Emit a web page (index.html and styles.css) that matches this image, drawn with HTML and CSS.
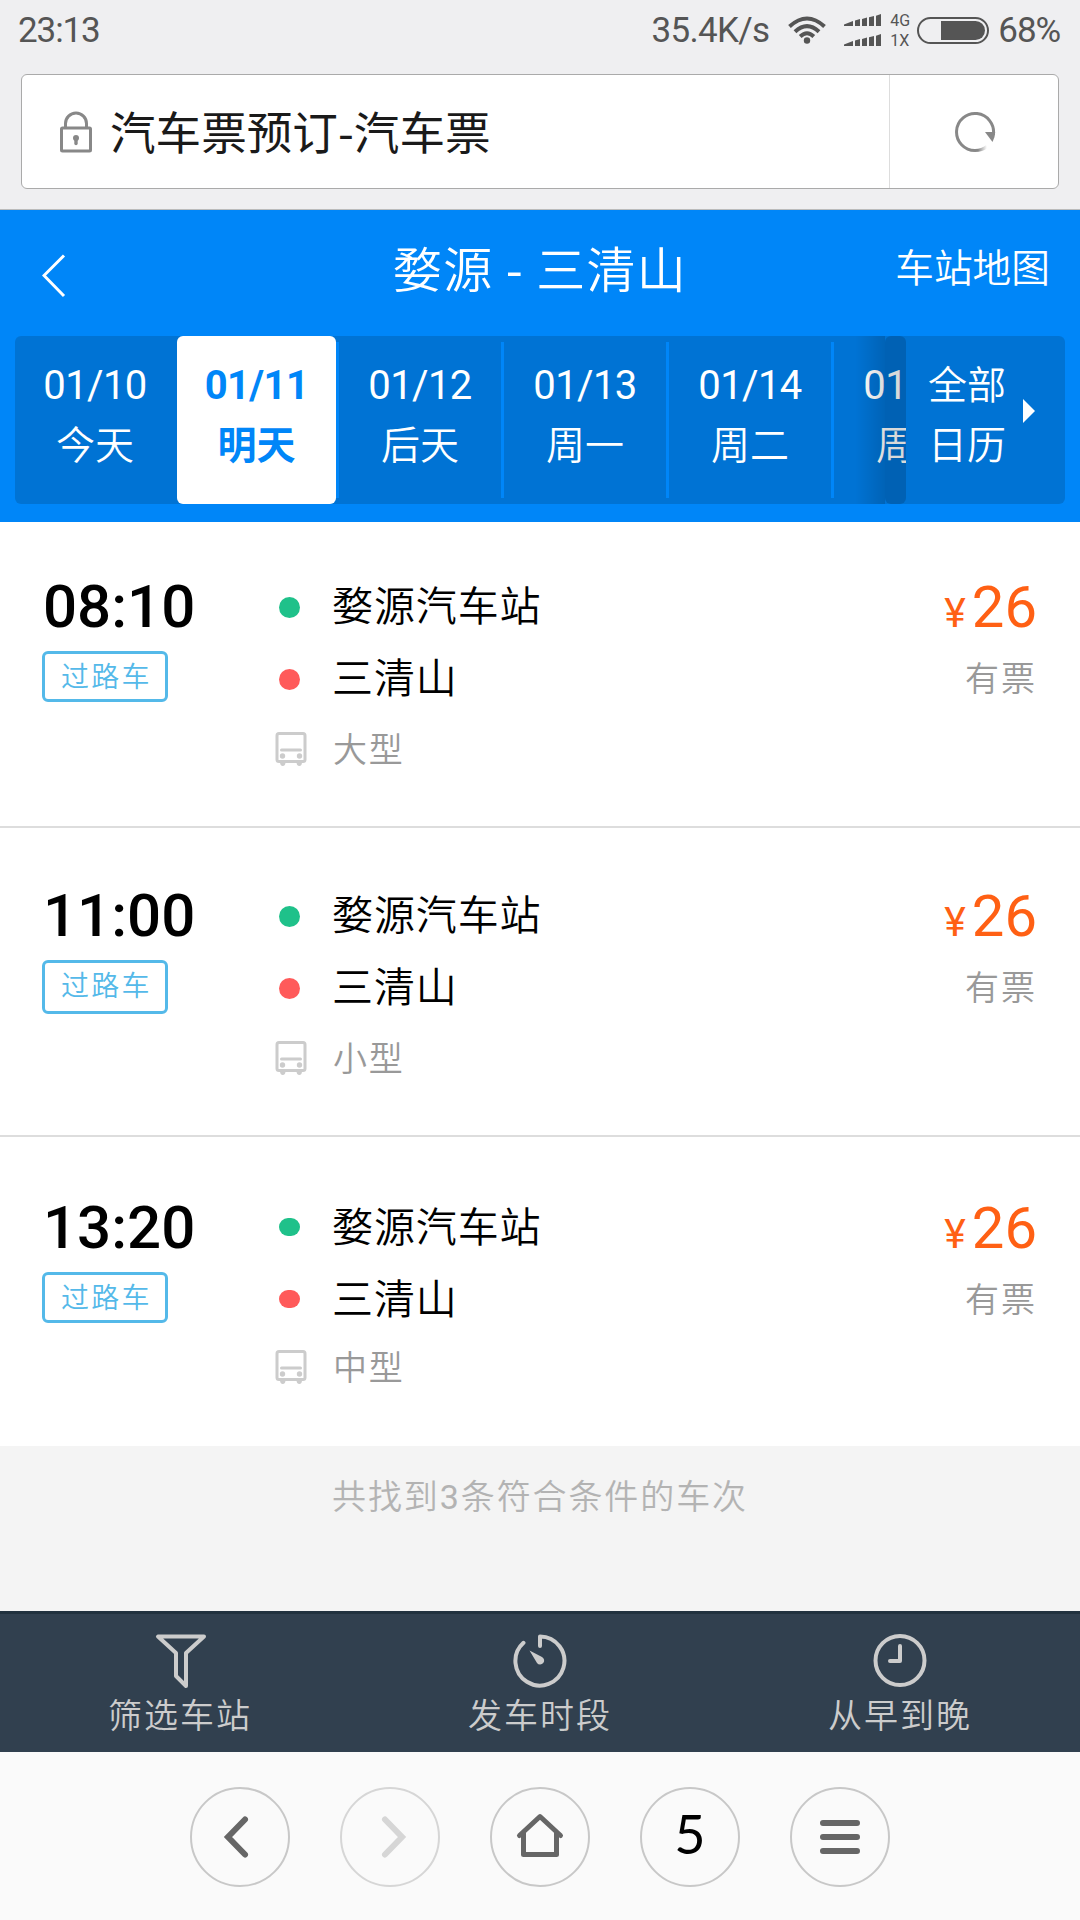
FILE: index.html
```html
<!DOCTYPE html>
<html lang="zh-CN">
<head>
    <meta charset="UTF-8">
    <meta name="viewport" content="width=device-width, initial-scale=1.0">
    <title>汽车票预订-汽车票</title>
    <link rel="stylesheet" href="styles.css">
</head>
<body>
    <div class="browser-top">
        <div class="status-bar">
            <span class="clock">23:13</span>
            <div class="status-right">
                <span class="speed">35.4K/s</span>
                <svg class="wifi" width="38" height="28" viewBox="0 0 38 28">
                    <g fill="none" stroke="#555" stroke-width="4">
                        <path d="M1.5 10.5Q19 -5.5 36.5 10.5"/>
                        <path d="M7 15.8Q19 4.5 31 15.8"/>
                        <path d="M12.2 20.5Q19 14 25.8 20.5"/>
                    </g>
                    <circle cx="19" cy="24.5" r="3.2" fill="#555"/>
                </svg>
                <div class="signals">
                    <svg width="37" height="12" viewBox="0 0 37 12" fill="#555"><path d="M0 10.5L9 7V12H0zM11 6.5L16 5V12H11zM18 5L23 3.5V12H18zM25 3.3L30 2V12H25zM32 1.7L37 0V12H32z"/></svg>
                    <svg width="37" height="12" viewBox="0 0 37 12" fill="#555"><path d="M0 10.5L9 7V12H0zM11 6.5L16 5V12H11zM18 5L23 3.5V12H18zM25 3.3L30 2V12H25zM32 1.7L37 0V12H32z"/></svg>
                </div>
                <div class="network"><span>4G</span><span>1X</span></div>
                <div class="battery"><div class="battery-level"></div></div>
                <span class="percent">68%</span>
            </div>
        </div>
        <div class="url-bar">
            <div class="url">
                <svg class="lock" width="32" height="42" viewBox="0 0 32 42">
                    <path d="M5.5 16V12.5a10.5 10.5 0 0 1 21 0V16" fill="none" stroke="#888" stroke-width="3"/>
                    <rect x="1.5" y="17" width="29" height="23" rx="1" fill="none" stroke="#888" stroke-width="3"/>
                    <circle cx="16" cy="27" r="3" fill="#888"/>
                    <path d="M16 27v5.5" stroke="#888" stroke-width="3.4" stroke-linecap="round"/>
                </svg>
                <span class="page-title">汽车票预订-汽车票</span>
            </div>
            <div class="reload">
                <svg width="42" height="42" viewBox="0 0 42 42">
                    <defs>
                        <linearGradient id="fade" gradientUnits="userSpaceOnUse" x1="24" y1="0" x2="33" y2="0">
                            <stop offset="0" stop-color="#888"/>
                            <stop offset="1" stop-color="#888" stop-opacity="0"/>
                        </linearGradient>
                    </defs>
                    <path d="M39.300 24A18.500 18.500 0 1 0 21 39.500" fill="none" stroke="#888" stroke-width="3"/>
                    <path d="M21 39.500Q28 39.500 33 35.500" fill="none" stroke="url(#fade)" stroke-width="3"/>
                    <path d="M31 21h10.200q0 5-2.700 10z" fill="#888"/>
                </svg>
            </div>
        </div>
    </div>

    <header class="header">
        <div class="title-row">
            <svg class="back" width="24" height="44" viewBox="0 0 24 44"><path d="M22 1.500L2 21.500l20 20.500" fill="none" stroke="#fff" stroke-width="3"/></svg>
            <h1>婺源 <span class="dash">-</span> 三清山</h1>
            <span class="map-link">车站地图</span>
        </div>
        <div class="dates">
            <div class="date-list">
                <div class="date first"><b>01/10</b><span>今天</span></div>
                <div class="date active"><b>01/11</b><span>明天</span></div>
                <div class="date"><b>01/12</b><span>后天</span></div>
                <div class="date"><b>01/13</b><span>周一</span></div>
                <div class="date"><b>01/14</b><span>周二</span></div>
                <div class="date"><b>01/15</b><span>周三</span></div>
            </div>
            <div class="calendar">
                <div class="calendar-text"><span>全部</span><span>日历</span></div>
                <div class="triangle"></div>
            </div>
        </div>
    </header>

    <main>
        <div class="bus">
            <div class="when">
                <div class="time">08:10</div>
                <div class="tag">过路车</div>
            </div>
            <div class="route">
                <div class="stop"><i class="dot from"></i>婺源汽车站</div>
                <div class="stop"><i class="dot to"></i>三清山</div>
                <div class="type">
                    <svg width="32" height="35" viewBox="0 0 32 35"><rect x="2" y="1.500" width="28" height="28" rx="2" fill="none" stroke="#ccc" stroke-width="3"/><path d="M6.500 18h19" stroke="#ccc" stroke-width="3" stroke-linecap="round"/><circle cx="7.500" cy="24" r="2.700" fill="#ccc"/><circle cx="24.500" cy="24" r="2.700" fill="#ccc"/><path d="M5 30h5.500q0 4-2.700 4T5 30zM21.500 30H27q0 4-2.700 4t-2.800-4z" fill="#ccc"/></svg>
                    <span>大型</span>
                </div>
            </div>
            <div class="fare">
                <div class="price"><small>¥</small>26</div>
                <div class="left">有票</div>
            </div>
        </div>
        <div class="bus second">
            <div class="when">
                <div class="time">11:00</div>
                <div class="tag">过路车</div>
            </div>
            <div class="route">
                <div class="stop"><i class="dot from"></i>婺源汽车站</div>
                <div class="stop"><i class="dot to"></i>三清山</div>
                <div class="type">
                    <svg width="32" height="35" viewBox="0 0 32 35"><rect x="2" y="1.500" width="28" height="28" rx="2" fill="none" stroke="#ccc" stroke-width="3"/><path d="M6.500 18h19" stroke="#ccc" stroke-width="3" stroke-linecap="round"/><circle cx="7.500" cy="24" r="2.700" fill="#ccc"/><circle cx="24.500" cy="24" r="2.700" fill="#ccc"/><path d="M5 30h5.500q0 4-2.700 4T5 30zM21.500 30H27q0 4-2.700 4t-2.800-4z" fill="#ccc"/></svg>
                    <span>小型</span>
                </div>
            </div>
            <div class="fare">
                <div class="price"><small>¥</small>26</div>
                <div class="left">有票</div>
            </div>
        </div>
        <div class="bus third">
            <div class="when">
                <div class="time">13:20</div>
                <div class="tag">过路车</div>
            </div>
            <div class="route">
                <div class="stop"><i class="dot from"></i>婺源汽车站</div>
                <div class="stop"><i class="dot to"></i>三清山</div>
                <div class="type">
                    <svg width="32" height="35" viewBox="0 0 32 35"><rect x="2" y="1.500" width="28" height="28" rx="2" fill="none" stroke="#ccc" stroke-width="3"/><path d="M6.500 18h19" stroke="#ccc" stroke-width="3" stroke-linecap="round"/><circle cx="7.500" cy="24" r="2.700" fill="#ccc"/><circle cx="24.500" cy="24" r="2.700" fill="#ccc"/><path d="M5 30h5.500q0 4-2.700 4T5 30zM21.500 30H27q0 4-2.700 4t-2.800-4z" fill="#ccc"/></svg>
                    <span>中型</span>
                </div>
            </div>
            <div class="fare">
                <div class="price"><small>¥</small>26</div>
                <div class="left">有票</div>
            </div>
        </div>
        <p class="summary">共找到<span class="count">3</span>条符合条件的车次</p>
    </main>

    <div class="filters">
        <div class="filter">
            <svg width="54" height="54" viewBox="0 0 54 54"><path d="M5 2.500h46L33 19v33l-10-10V19z" fill="none" stroke="#ccc" stroke-width="4" stroke-linejoin="round"/></svg>
            <span>筛选车站</span>
        </div>
        <div class="filter">
            <svg width="54" height="54" viewBox="0 0 54 54">
                <path d="M27 12V2.500A24.500 24.500 0 1 1 10.500 8.800" fill="none" stroke="#ccc" stroke-width="4" stroke-linecap="round" stroke-linejoin="round"/>
                <path d="M16.500 16.500l12.500 6.500a4 4 0 1 1-5 6z" fill="#ccc"/>
            </svg>
            <span>发车时段</span>
        </div>
        <div class="filter">
            <svg width="54" height="54" viewBox="0 0 54 54">
                <circle cx="27" cy="26.500" r="24.500" fill="none" stroke="#ccc" stroke-width="4"/>
                <path d="M27 12v15H17" fill="none" stroke="#ccc" stroke-width="4" stroke-linecap="round" stroke-linejoin="round"/>
            </svg>
            <span>从早到晚</span>
        </div>
    </div>

    <nav class="browser-nav">
        <div class="nav-btn"><svg width="60" height="60" viewBox="0 0 60 60"><path d="M35 12.500L18 30l17 17.500" fill="none" stroke="#666" stroke-width="6" stroke-linecap="round"/></svg></div>
        <div class="nav-btn disabled"><svg width="60" height="60" viewBox="0 0 60 60"><path d="M25 12.500L42 30L25 47.500" fill="none" stroke="#d6d6d6" stroke-width="6" stroke-linecap="round"/></svg></div>
        <div class="nav-btn"><svg width="60" height="60" viewBox="0 0 60 60"><path d="M9.500 28.500L30 9.500l20.500 19M13.500 26v21.500h33V26" fill="none" stroke="#666" stroke-width="5" stroke-linecap="round" stroke-linejoin="round"/></svg></div>
        <div class="nav-btn tabs"><span>5</span></div>
        <div class="nav-btn"><svg width="60" height="60" viewBox="0 0 60 60"><path d="M13 16h34M13 30h34M13 44h34" stroke="#666" stroke-width="6" stroke-linecap="round"/></svg></div>
    </nav>
</body>
</html>
```
FILE: styles.css
```css
* {
    box-sizing: border-box;
}

body {
    margin: 0;
    width: 1080px;
    height: 1920px;
    background: #f4f4f4;
    overflow: hidden;
    font-family: Roboto, "Noto Sans CJK SC", sans-serif;
    display: flex;
    flex-direction: column;
}

svg {
    display: block;
    flex: none;
}

.browser-top {
    height: 210px;
    background: #efeff1;
    border-bottom: 1px solid #bbb;
    padding: 0 21px;
}

.status-bar {
    height: 74px;
    margin: 0 -1px 0 -3px;
    display: flex;
    justify-content: space-between;
    padding-top: 10px;
    font-size: 35px;
    line-height: 42px;
    color: #555;
}

.clock {
    letter-spacing: -1.1px;
}

.status-right {
    display: flex;
    align-items: flex-start;
}

.speed {
    letter-spacing: -0.7px;
}

.wifi {
    margin: 6px 18px 0 19px;
}

.signals {
    display: flex;
    flex-direction: column;
    gap: 8px;
    margin-top: 4px;
}

.network {
    width: 27px;
    margin-left: 9px;
    padding-top: 1px;
    display: flex;
    flex-direction: column;
    font-size: 16px;
    line-height: 20px;
}

.battery {
    width: 72px;
    height: 27px;
    margin: 7px 9px 0 0;
    border: 2px solid #555;
    border-radius: 14px;
    padding: 2px;
    display: flex;
    justify-content: flex-end;
}

.battery-level {
    width: 44px;
    background: #555;
    border-radius: 0 10px 10px 0;
}

.percent {
    letter-spacing: -1.1px;
}

.url-bar {
    height: 115px;
    background: #fff;
    border: 1px solid #aaa;
    border-radius: 6px;
    display: flex;
}

.url {
    flex: 1;
    display: flex;
    align-items: center;
    gap: 18px;
    padding-left: 38px;
    font-size: 45.6px;
    font-family: "Noto Sans CJK SC", sans-serif;
    color: #1a1a1a;
}

.page-title {
    padding-bottom: 4px;
}

.reload {
    width: 169px;
    border-left: 1px solid #ddd;
    display: flex;
    align-items: center;
    justify-content: center;
    padding-left: 2px;
}

.header {
    height: 312px;
    background: #0086f8;
    color: #fff;
    padding: 0 15px 18px;
}

.title-row {
    height: 126px;
    display: grid;
    grid-template-columns: 188px 1fr 200px;
    padding: 0 15px 0 27px;
}

.back {
    margin-top: 44px;
}

h1 {
    margin: 0;
    padding-top: 20px;
    text-align: center;
    font-family: "Noto Sans CJK SC", sans-serif;
    font-weight: 350;
    font-size: 49px;
    line-height: 74px;
    letter-spacing: 1.3px;
}

.dash {
    font-weight: 400;
}

.map-link {
    padding-top: 31px;
    text-align: right;
    font-size: 38.7px;
    font-weight: 350;
    line-height: 56px;
}

.dates {
    height: 168px;
    background: #0073d4;
    border-radius: 6px;
    display: flex;
}

.date-list {
    width: 891px;
    display: flex;
    overflow: hidden;
    position: relative;
}

/* shade over the dates that scroll under the calendar button */
.date-list::before {
    content: "";
    position: absolute;
    top: 0;
    right: 21px;
    width: 30px;
    height: 100%;
    background: linear-gradient(90deg, rgba(0, 0, 0, 0), rgba(0, 0, 0, 0.14));
}

.date-list::after {
    content: "";
    position: absolute;
    top: 0;
    right: 0;
    width: 21px;
    height: 100%;
    border-radius: 6px;
    background: rgba(0, 0, 0, 0.15);
}

.date {
    flex: none;
    width: 165px;
    padding-top: 20px;
    display: flex;
    flex-direction: column;
    align-items: center;
    border-left: 3px solid #0086f8;
    border-image: linear-gradient(transparent 6px, #0086f8 6px, #0086f8 162px, transparent 162px) 0 0 0 3;
    font-size: 39px;
    font-weight: 350;
    line-height: 60px;
}

.date b {
    height: 60px;
    font-size: 40px;
    letter-spacing: -0.6px;
    font-weight: 400;
}

.date.first {
    width: 162px;
    padding-right: 2px;
    border: 0;
}

.date.active {
    width: 159px;
    border: 0;
    border-radius: 6px;
    background: #fff;
    color: #0086f8;
    font-weight: 700;
}

.date.active b {
    font-weight: 700;
}

.calendar {
    flex: 1;
    display: flex;
    align-items: center;
    padding-left: 22px;
    gap: 17px;
    font-size: 39px;
    font-weight: 350;
    line-height: 60px;
}

.calendar-text {
    height: 168px;
    padding-top: 20px;
    display: flex;
    flex-direction: column;
}

.triangle {
    margin-top: -18px;
    border-left: 12px solid #fff;
    border-top: 12px solid transparent;
    border-bottom: 12px solid transparent;
}

.bus {
    height: 306px;
    background: #fff;
    border-bottom: 2px solid #ddd;
    padding: 58px 43px 0 42px;
    display: flex;
}

.bus.second,
.bus.third {
    height: 309px;
    padding-top: 61px;
}

.bus.third {
    padding-top: 64px;
    border-bottom: 0;
}

.when {
    width: 233px;
}

.time {
    padding-left: 1px;
    height: 71px;
    font-size: 60px;
    font-weight: 500;
    line-height: 54px;
    color: #000;
}

.tag {
    width: 126px;
    height: 51px;
    border: 3px solid #54b9e9;
    border-radius: 6px;
    color: #54b9e9;
    padding-left: 16px;
    font-size: 28px;
    font-weight: 350;
    letter-spacing: 2.2px;
    line-height: 47px;
}

.second .tag {
    height: 54px;
}

.route {
    flex: 1;
}

.stop {
    height: 72px;
    display: flex;
    align-items: flex-start;
    font-size: 41px;
    font-weight: 350;
    letter-spacing: 0.9px;
    line-height: 55px;
    color: #000;
}

.dot {
    width: 21px;
    height: 21px;
    margin: 17px 32px 0 4px;
    border-radius: 50%;
}

.third .dot {
    height: 18px;
    border-radius: 9px;
}

.from {
    background: #1fc18a;
}

.to {
    background: #ff5a5a;
}

.type {
    display: flex;
    gap: 26px;
    padding-top: 8px;
    font-size: 34px;
    font-weight: 350;
    line-height: 37px;
    letter-spacing: 1.7px;
    color: #999;
}

.third .type {
    padding-top: 5px;
}

.fare {
    text-align: right;
}

.price {
    height: 72px;
    font-size: 58px;
    line-height: 54px;
    color: #ff6014;
}

.price small {
    margin-right: 6px;
    font-size: 41px;
}

.left {
    font-size: 34px;
    font-weight: 350;
    letter-spacing: 2px;
    line-height: 54px;
    color: #999;
}

.summary {
    margin: 0;
    height: 165px;
    padding-top: 26px;
    text-align: center;
    font-size: 34px;
    font-weight: 350;
    letter-spacing: 1.9px;
    line-height: 51px;
    color: #b3b3b3;
}

.count {
    font-weight: 400;
}

.filters {
    height: 141px;
    background: #31404f;
    border-top: 3px solid #22323f;
    display: flex;
}

.filter {
    flex: 1;
    display: flex;
    flex-direction: column;
    align-items: center;
    gap: 3px;
    padding-top: 20px;
    font-size: 34px;
    font-weight: 350;
    letter-spacing: 2px;
    line-height: 50px;
    color: #ccc;
}

.browser-nav {
    height: 168px;
    background: #fafafa;
    display: flex;
    justify-content: center;
    gap: 50px;
    padding-top: 35px;
}

.nav-btn {
    width: 100px;
    height: 100px;
    border: 2px solid #c8c8c8;
    border-radius: 50%;
    display: flex;
    align-items: center;
    justify-content: center;
}

.nav-btn.disabled {
    border-color: #d6d6d6;
}

.tabs {
    padding-bottom: 7px;
    font-family: Lato, sans-serif;
    font-size: 54px;
    color: #000;
}
```
